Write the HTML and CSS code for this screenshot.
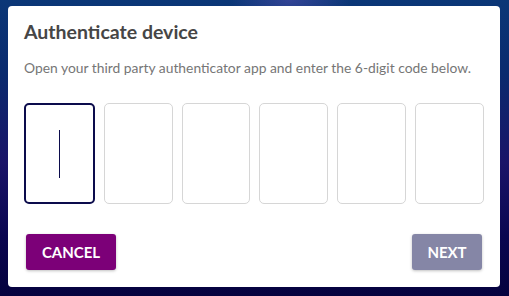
FILE: index.html
```html
<!DOCTYPE html>
<html>
<head>
<meta charset="utf-8">
<link rel="stylesheet" href="styles.css">
</head>
<body>
<div class="backdrop">
  <div class="dialog">
    <h1 class="title">Authenticate device</h1>
    <p class="desc">Open your third party authenticator app and enter the 6-digit code below.</p>
    <div class="code">
      <div class="digit active"><span class="caret"></span></div>
      <div class="digit"></div>
      <div class="digit"></div>
      <div class="digit"></div>
      <div class="digit"></div>
      <div class="digit"></div>
    </div>
    <div class="actions">
      <button class="btn cancel">CANCEL</button>
      <button class="btn next">NEXT</button>
    </div>
  </div>
</div>
</body>
</html>
```
FILE: styles.css
```css
html, body {
  margin: 0;
  padding: 0;
}
body {
  width: 509px;
  height: 296px;
  overflow: hidden;
  font-family: Lato, "Open Sans", sans-serif;
}
.backdrop {
  width: 509px;
  height: 296px;
  box-sizing: border-box;
  padding: 6px 9px 9px 8px;
  background:
    radial-gradient(ellipse 60px 30px at 290px 0px, rgba(90,80,180,0.5), transparent),
    linear-gradient(180deg, #0b3777 0%, #0a2a6e 25%, #1a1468 55%, #0a0650 80%, #05023e 100%);
}
.dialog {
  background: #fff;
  border-radius: 4px;
  height: 281px;
  box-sizing: border-box;
  padding: 14px 16px 0 16px;
  display: flex;
  flex-direction: column;
}
.title {
  margin: 0;
  font-size: 19.5px;
  line-height: 24px;
  font-weight: 700;
  color: #464646;
}
.desc {
  margin: 15px 0 0 0;
  font-size: 13.85px;
  line-height: 18px;
  color: #767676;
}
.code {
  margin-top: 26px;
  display: flex;
  gap: 9px;
}
.digit {
  flex: 1;
  height: 101px;
  box-sizing: border-box;
  border: 1px solid #d6d6d6;
  border-radius: 5px;
  display: flex;
  align-items: center;
  justify-content: center;
}
.digit.active {
  border: 2px solid #0c0c4c;
}
.caret {
  width: 1px;
  height: 48px;
  background: #0c0c4c;
}
.actions {
  margin-top: 30px;
  padding: 0 2px;
  display: flex;
  justify-content: space-between;
}
.btn {
  height: 36px;
  border: none;
  border-radius: 3px;
  color: #fff;
  font-family: Lato, sans-serif;
  font-weight: 700;
  font-size: 15px;
  padding: 0;
  box-shadow: 0 1px 3px rgba(0,0,0,0.25);
}
.cancel {
  background: #7c0078;
  width: 90px;
}
.next {
  background: #8586a6;
  width: 70px;
}
```
